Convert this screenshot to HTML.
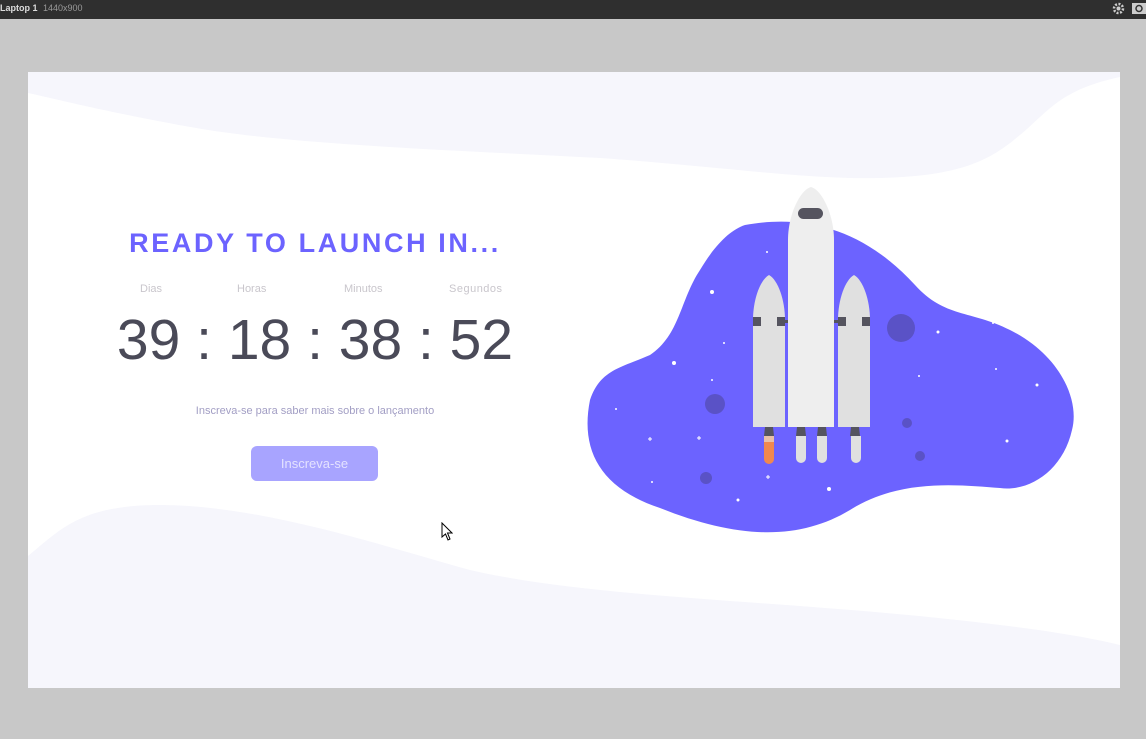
<!DOCTYPE html>
<html><head><meta charset="utf-8"><style>
html,body{margin:0;padding:0;width:1146px;height:739px;overflow:hidden;background:#c8c8c8;font-family:"Liberation Sans",sans-serif}
.top{position:absolute;left:0;top:0;width:1146px;height:19px;background:#2f2f2f;color:#ddd;font-size:9px;line-height:16px}
.card{position:absolute;left:28px;top:72px;width:1092px;height:616px;background:#fff;overflow:hidden}
.t{position:absolute;text-align:center;white-space:nowrap}
</style></head><body>
<div class="top"><b style="margin-left:0">Laptop 1</b> <span style="color:#999;margin-left:3px">1440x900</span>
<svg style="position:absolute;left:1112px;top:2px" width="13" height="13" viewBox="0 0 13 13"><circle cx="6.5" cy="6.5" r="4.5" fill="none" stroke="#ccc" stroke-width="2.5" stroke-dasharray="2 1.5"/><circle cx="6.5" cy="6.5" r="2" fill="#ccc"/></svg>
<svg style="position:absolute;left:1132px;top:2px" width="14" height="12"><rect x="0" y="1" width="14" height="11" fill="#ccc"/><circle cx="7" cy="6.5" r="3" fill="none" stroke="#333" stroke-width="1.5"/></svg>
</div>
<div class="card">
<svg style="position:absolute;left:0;top:0" width="1092" height="616" viewBox="28 72 1092 616">
<path d="M28 72 L1120 72 L1120 77 C1060 90 1050 110 1020 135 C990 160 960 180 850 178 C780 176 700 165 600 158 C450 150 300 145 202 129 C120 115 60 100 28 93 Z" fill="#f6f6fc"/>
<path d="M28 556 C60 530 80 505 160 505 C260 505 380 545 470 570 C600 600 800 600 1000 625 C1060 632 1100 640 1120 645 L1120 688 L28 688 Z" fill="#f6f6fc"/>
<path d="M745 225 C800 215 860 225 915 285 C945 318 970 310 1010 330 C1060 355 1080 400 1072 430 C1063 470 1030 492 1000 488 C960 485 900 478 850 510 C800 540 740 540 660 508 C600 488 580 450 590 400 C600 370 620 368 650 355 C680 335 680 300 700 270 C715 245 730 230 745 225 Z" fill="#6c63ff"/>
<g fill="#5a52c6"><circle cx="901" cy="328" r="14"/><circle cx="715" cy="404" r="10"/><circle cx="706" cy="478" r="6"/><circle cx="907" cy="423" r="5"/><circle cx="920" cy="456" r="5"/></g>
<g fill="#fff"><circle cx="712" cy="292" r="2"/><circle cx="674" cy="363" r="2"/><circle cx="829" cy="489" r="2"/><circle cx="738" cy="500" r="1.5"/><circle cx="938" cy="332" r="1.5"/><circle cx="1037" cy="385" r="1.5"/><circle cx="1007" cy="441" r="1.5"/><circle cx="996" cy="369" r="1"/><circle cx="919" cy="376" r="1"/><circle cx="767" cy="252" r="1"/><circle cx="866" cy="242" r="1"/><circle cx="724" cy="343" r="1"/><circle cx="712" cy="380" r="1"/><circle cx="616" cy="409" r="1"/><circle cx="652" cy="482" r="1"/><circle cx="993" cy="323" r="1"/>
<path d="M648 439h4M650 437v4M697 438h4M699 436v4M766 477h4M768 475v4" stroke="#fff" stroke-width="1"/></g>
<path d="M753 427 V320 C753 300 760 280 769 275 C778 280 785 300 785 320 V427 Z" fill="#e0e0e0"/>
<path d="M838 427 V320 C838 300 845 280 854 275 C863 280 870 300 870 320 V427 Z" fill="#e0e0e0"/>
<path d="M788 427 V240 C788 215 800 190 811 187 C822 190 834 215 834 240 V427 Z" fill="#eeeeee"/>
<rect x="798" y="208" width="25" height="11" rx="5.5" fill="#55545f"/>
<g fill="#55545f"><rect x="753" y="317" width="8" height="9"/><rect x="777" y="317" width="8" height="9"/><rect x="838" y="317" width="8" height="9"/><rect x="862" y="317" width="8" height="9"/><rect x="785" y="320" width="3" height="3"/><rect x="834" y="320" width="4" height="3"/>
<path d="M765 427h8l1 9h-10zM797 427h8l1 9h-10zM818 427h8l1 9h-10zM851 427h8l1 9h-10z"/></g>
<rect x="764" y="436" width="10" height="28" rx="5" fill="#f0884f"/>
<rect x="764" y="436" width="10" height="6" fill="#e8c0a8"/>
<g fill="#e0e0e0"><path d="M796 436h10v22a5 5 0 0 1-10 0z"/><path d="M817 436h10v22a5 5 0 0 1-10 0z"/><path d="M851 436h10v22a5 5 0 0 1-10 0z"/></g>
</svg>
<div class="t" style="left:47px;width:480px;top:155px;font-size:27px;font-weight:bold;letter-spacing:2.6px;color:#6c63ff;line-height:32px">READY TO LAUNCH IN...</div>
<div style="position:absolute;top:210px;font-size:11px;color:#c9c6cc;line-height:14px">
<span style="position:absolute;left:112px">Dias</span><span style="position:absolute;left:209px">Horas</span><span style="position:absolute;left:316px">Minutos</span><span style="position:absolute;left:421px;white-space:nowrap;letter-spacing:0.5px">Segundos</span></div>
<div class="t" style="left:47px;width:480px;top:236px;font-size:57px;color:#4a4a58;line-height:64px">39 : 18 : 38 : 52</div>
<div class="t" style="left:47px;width:480px;top:332px;font-size:11px;color:#a29ec4;line-height:14px">Inscreva-se para saber mais sobre o lançamento</div>
<div style="position:absolute;left:223px;top:374px;width:127px;height:35px;background:#a8a4ff;border-radius:6px;color:#e4e2ff;font-size:13px;line-height:35px;text-align:center">Inscreva-se</div>
<svg style="position:absolute;left:413px;top:450px" width="12" height="20"><path d="M1 1 L1 15 L4.5 12 L7 18 L9 17 L6.5 11 L11 11 Z" fill="#fff" stroke="#000" stroke-width="1"/></svg>
</div>
</body></html>
